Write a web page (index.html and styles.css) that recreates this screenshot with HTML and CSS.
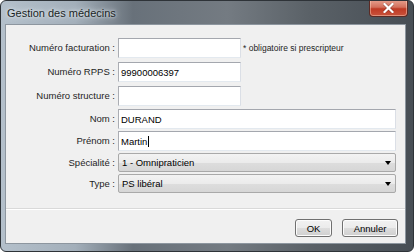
FILE: index.html
```html
<!DOCTYPE html>
<html lang="fr">

<head>
    <meta charset="UTF-8">
    <title>Gestion des médecins</title>
    <link rel="stylesheet" href="styles.css">
</head>

<body>
    <div class="window">
        <div class="titlebar">
            <span class="title">Gestion des médecins</span>
            <button class="close_btn" aria-label="Fermer">
                <svg width="11" height="10" viewBox="0 0 11 10">
                    <path d="M1.5 1 L9.5 9 M9.5 1 L1.5 9" stroke="#3a1a1a" stroke-width="3.4" stroke-linecap="square" opacity="0.35"/>
                    <path d="M1.5 1 L9.5 9 M9.5 1 L1.5 9" stroke="#fff" stroke-width="2.2" stroke-linecap="square"/>
                </svg>
            </button>
        </div>

        <div class="client">
            <div class="form">
                <label for="num_fact">Numéro facturation :</label>
                <div class="field">
                    <input type="text" id="num_fact" class="short">
                    <span class="hint">* obligatoire si prescripteur</span>
                </div>

                <label for="num_rpps">Numéro RPPS :</label>
                <div class="field"><input type="text" id="num_rpps" class="short" value="99900006397"></div>

                <label for="num_struct">Numéro structure :</label>
                <div class="field"><input type="text" id="num_struct" class="short"></div>

                <label for="nom">Nom :</label>
                <div class="field"><input type="text" id="nom" value="DURAND"></div>

                <label for="prenom">Prénom :</label>
                <div class="field"><div class="fake_input">Martin<span class="caret"></span></div></div>

                <label for="specialite">Spécialité :</label>
                <div class="field"><div class="combo" id="specialite">1 - Omnipraticien<span class="arrow"></span></div></div>

                <label for="type">Type :</label>
                <div class="field"><div class="combo" id="type">PS libéral<span class="arrow"></span></div></div>
            </div>

            <div class="footer">
                <button class="btn ok">OK</button>
                <button class="btn cancel">Annuler</button>
            </div>
        </div>
    </div>
</body>

</html>
```

FILE: styles.css
```css
body {
    margin: 0;
    font-family: "Liberation Sans", Arial, sans-serif;
    font-size: 9.5px;
    color: #000;
    background: #fff;
}

.window {
    width: 414px;
    height: 252px;
    box-sizing: border-box;
    display: flex;
    flex-direction: column;
    border: 1px solid #2e3338;
    border-radius: 6px;
    overflow: hidden;
    background: linear-gradient(90deg, #b4c0cb 0, #a3afba 18%, #68717a 32%, #747b82 55%, #5a6167 75%, #474e55 100%);
}

/* barre de titre */
.titlebar {
    height: 23px;
    display: flex;
    align-items: flex-start;
    justify-content: space-between;
    padding-left: 6px;
}

.title {
    margin-top: 6px;
    font-family: "Liberation Sans", Arial, sans-serif;
    font-size: 11px;
    color: #1a1f24;
    text-shadow: 0 0 6px #e6edf2, 0 0 3px #e6edf2;
}

.close_btn {
    width: 39px;
    height: 17px;
    margin: -1px 5px 0 0;
    padding: 0;
    border: 1px solid #5b2a24;
    border-top: none;
    border-radius: 0 0 4px 4px;
    background: linear-gradient(#e6a08e 0, #d3705c 45%, #bf3a24 55%, #c9533c 100%);
    box-shadow: inset 0 0 0 1px rgba(255, 220, 200, 0.45);
    display: flex;
    align-items: center;
    justify-content: center;
}

/* zone cliente */
.client {
    flex: 1;
    margin: 0 7px 7px 4px;
    border: 1px solid #8d969f;
    background: #f0f0f0;
    display: flex;
    flex-direction: column;
}

.form {
    flex: 1;
    display: grid;
    grid-template-columns: 109px 1fr;
    grid-template-rows: 24px 24px 23px 22px 22px 21px 19px;
    column-gap: 3px;
    padding: 13px 9px 0 0;
    align-items: start;
}

label {
    text-align: right;
    line-height: 20px;
    color: #1e1e1e;
}

.field {
    display: flex;
    align-items: center;
}

input[type="text"],
.fake_input {
    box-sizing: border-box;
    width: 100%;
    height: 20px;
    margin: 0;
    padding: 0 2px;
    border: 1px solid #abadb3;
    border-top-color: #a4a7ae;
    border-bottom-color: #e3e9ef;
    border-right-color: #dbdfe6;
    background: #fff;
    font-family: "Liberation Sans", Arial, sans-serif;
    font-size: 9.5px;
    color: #000;
    outline: none;
}

.fake_input {
    display: flex;
    align-items: center;
}

.caret {
    display: inline-block;
    width: 1px;
    height: 11px;
    margin-left: 1px;
    background: #000;
}

input.short {
    width: 123px;
    flex: none;
}

.hint {
    margin-left: 2px;
    font-size: 8.5px;
    color: #1e1e1e;
    white-space: nowrap;
}

.combo {
    position: relative;
    box-sizing: border-box;
    width: 100%;
    height: 19px;
    padding: 0 3px;
    display: flex;
    align-items: center;
    border: 1px solid #a9a9a9;
    border-radius: 2px;
    background: linear-gradient(#f3f3f3 0, #ebebeb 50%, #dddddd 51%, #d6d6d6 100%);
    color: #000;
}

.arrow {
    position: absolute;
    right: 4px;
    top: 7px;
    width: 0;
    height: 0;
    border-left: 3px solid transparent;
    border-right: 3px solid transparent;
    border-top: 4px solid #000;
}

/* pied */
.footer {
    height: 35px;
    border-top: 1px solid #d9d9d9;
    box-shadow: inset 0 1px 0 #fff;
    display: flex;
    justify-content: flex-end;
    align-items: flex-start;
    gap: 10px;
    padding: 10px 7px 0 0;
    box-sizing: border-box;
}

.btn {
    height: 18px;
    padding: 0;
    border: 1px solid #707070;
    border-radius: 3px;
    background: linear-gradient(#f2f2f2 0, #ebebeb 50%, #dddddd 51%, #cfcfcf 100%);
    box-shadow: inset 0 0 0 1px #fcfcfc;
    font-family: "Liberation Sans", Arial, sans-serif;
    font-size: 9.5px;
    color: #000;
}

.ok {
    width: 37px;
}

.cancel {
    width: 56px;
}
```
